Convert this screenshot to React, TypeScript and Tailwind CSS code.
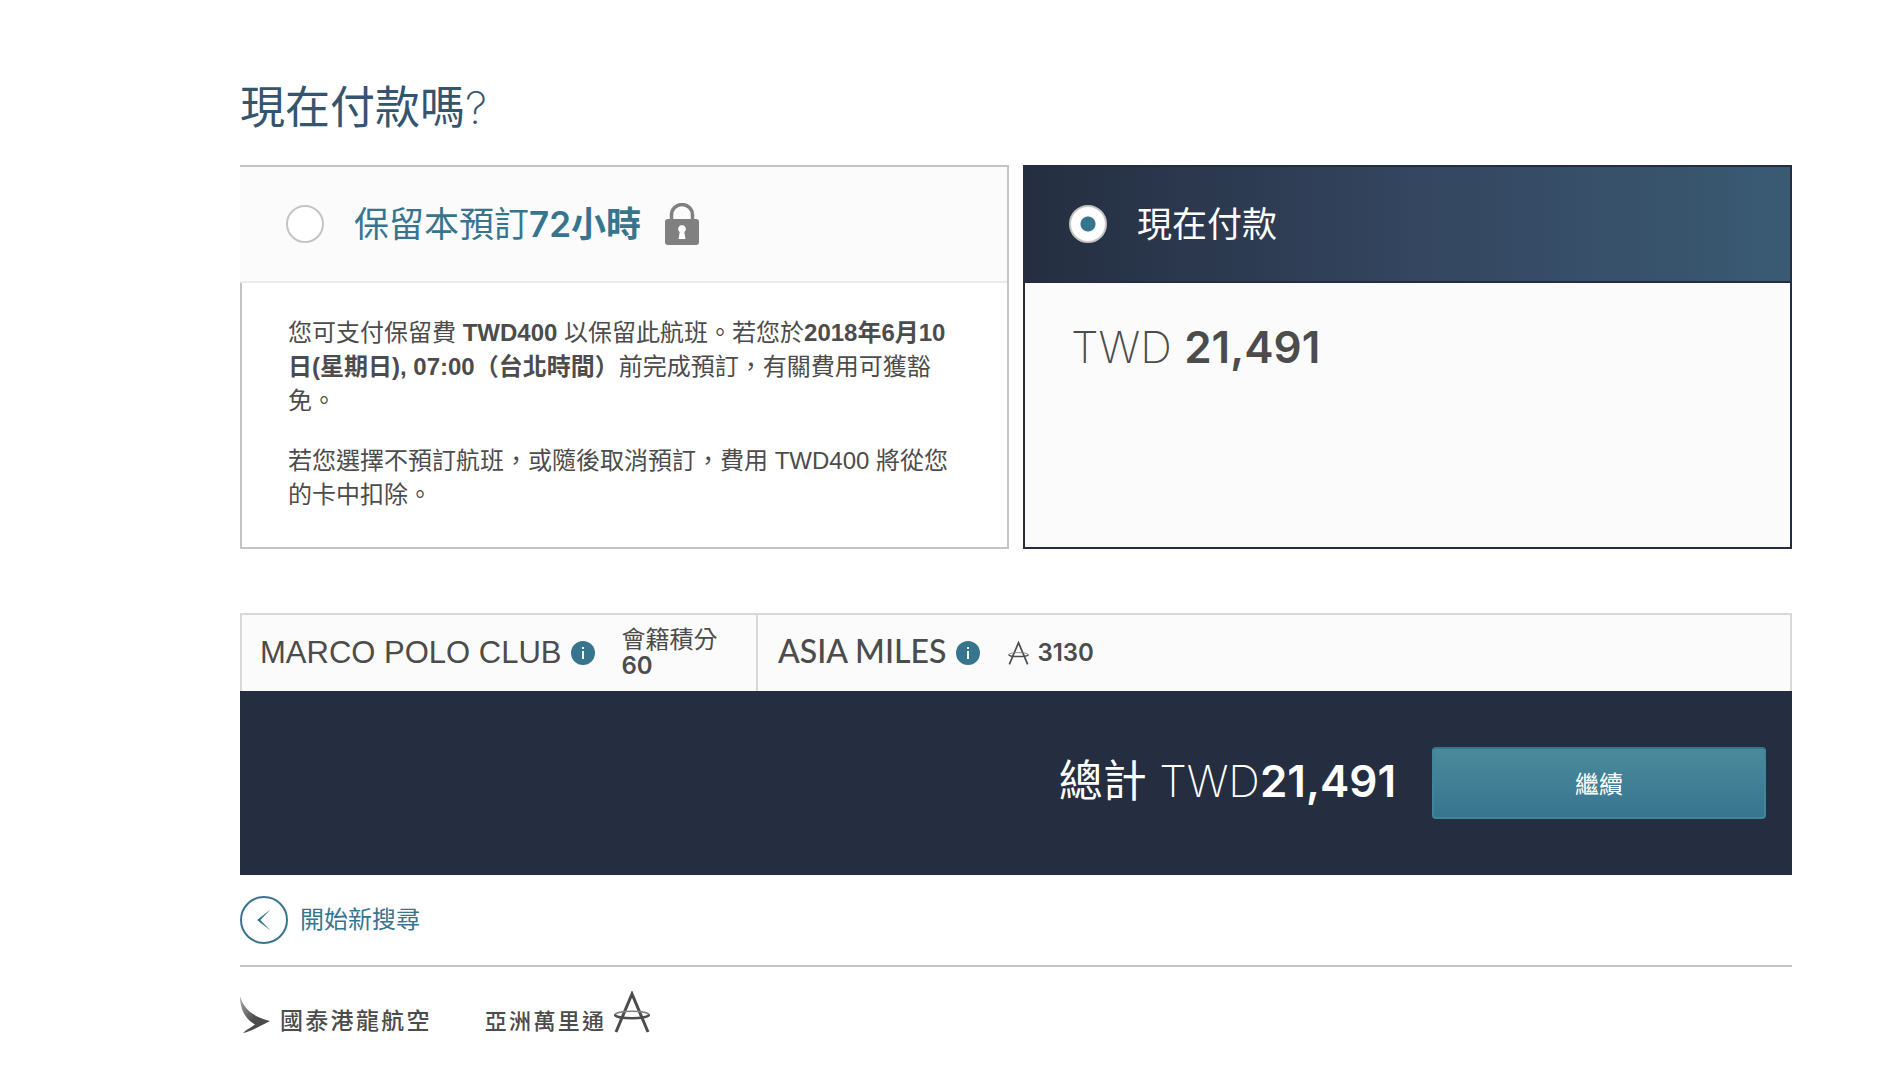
import React from "react";

function InfoButton({ label }: { label: string }) {
  return (
    <button type="button" aria-label={label} className="flex size-6 shrink-0 items-center justify-center rounded-full bg-[#37758f]">
      <svg viewBox="0 0 24 24" className="size-6" fill="#fff" aria-hidden="true">
        <rect x="11" y="6" width="2" height="2" />
        <rect x="11" y="10" width="2" height="8" />
      </svg>
    </button>
  );
}

function MilesIcon({ className }: { className: string }) {
  return (
    <svg viewBox="0 0 36 42" className={className} fill="none" stroke="#4c4c4c" aria-hidden="true">
      <path d="M2 41 18 3 34 41" strokeWidth="3" strokeLinejoin="miter" />
      <path d="M1 24C1 19 35 19 35 24" strokeWidth="1.5" stroke="#808080" />
      <path d="M1 23.500C1 28.500 35 28.500 35 23.500" strokeWidth="2.600" />
    </svg>
  );
}

const radioBase =
  "size-[38px] shrink-0 appearance-none rounded-full border-2 border-[#c4c4c4] bg-white";

export default function App() {
  return (
    <main lang="zh-Hant" className="min-h-screen bg-white pt-[78px] pr-[92px] pl-[240px] font-[Inter,'Noto_Sans_CJK_TC',sans-serif] text-2xl text-[#4c4c4c]">
      <h1 className="text-[45px] leading-[60px] text-[#35546f]">現在付款嗎<span className="font-extralight">?</span></h1>

      <section aria-label="付款選項" className="mt-[27px] grid grid-cols-2 gap-3.5 leading-[34px]">
        <div className="border-r-2 border-b-2 border-[#c4c4c4]">
          <div className="flex h-[118px] items-center border-t-2 border-b-2 border-t-[#c4c4c4] border-b-[#ebebeb] bg-[#fbfbfb] pl-[46px]">
            <input id="hold" name="payment" type="radio" className={radioBase} />
            <label htmlFor="hold" className="ml-[30px] text-[35px] leading-[50px] text-[#37758f]">
              保留本預訂<b className="font-semibold">72小時</b>
            </label>
            <svg viewBox="0 0 34 42" className="ml-6 h-[42px] w-[34px]" aria-hidden="true">
              <path d="M6.500 18V12a10.500 10.500 0 0 1 21 0v6" fill="none" stroke="#808080" strokeWidth="3.500" />
              <rect y="16" width="34" height="26" rx="3" fill="#808080" />
              <path d="M17 22a4 4 0 0 1 2.300 7.200L20.500 36h-7l1.200-6.800A4 4 0 0 1 17 22z" fill="#fff" />
            </svg>
          </div>
          <div className="space-y-[26px] border-l-2 border-[#c4c4c4] pt-[33px] pr-14 pb-[35px] pl-[46px] font-['Liberation_Sans','Noto_Sans_CJK_TC',sans-serif]">
            <p>
              您可支付保留費 <b className="font-bold">TWD400</b> 以保留此航班。若您於<b className="font-bold">2018年6月10日(星期日), 07:00（台北時間）</b>前完成預訂，有關費用可獲豁免。
            </p>
            <p>若您選擇不預訂航班，或隨後取消預訂，費用 TWD400 將從您的卡中扣除。</p>
          </div>
        </div>

        <div className="border-2 border-[#242e40] bg-[#fbfbfb]">
          <div className="flex h-[116px] items-center border-b-2 border-[#242e40] bg-linear-to-r from-[#242e40] via-[#34455f] to-[#3a5a73] pl-11">
            <input id="pay" name="payment" type="radio" defaultChecked className={radioBase + " bg-[radial-gradient(circle,#37758f_7px,#fff_8px)]"} />
            <label htmlFor="pay" className="ml-[30px] text-[35px] leading-[50px] text-white">現在付款</label>
          </div>
          <p className="pt-9 pl-[46px] text-[44px] leading-[56px] font-extralight">
            TWD <b className="font-semibold">21,491</b>
          </p>
        </div>
      </section>

      <section aria-label="總計" className="mt-16">
        <div className="flex h-[78px] border-2 border-b-0 border-[#d8d8d8] bg-[#fbfbfb]">
          <div className="flex w-[516px] shrink-0 items-center border-r-2 border-[#d8d8d8] pl-[18px]">
            <span className="font-['Liberation_Sans'] text-[31px] leading-[40px]">MARCO POLO CLUB</span>
            <span className="ml-2.5 flex"><InfoButton label="馬可孛羅會資料" /></span>
            <p className="ml-[26px] leading-[26px]">
              會籍積分<br /><b className="font-semibold">60</b>
            </p>
          </div>
          <div className="flex items-center pl-5">
            <span className="pb-1 font-[Lato] text-[32px] leading-[40px] font-medium">ASIA MILES</span>
            <span className="ml-2.5 flex"><InfoButton label="亞洲萬里通資料" /></span>
            <MilesIcon className="ml-7 h-6 w-[21px]" />
            <b className="ml-2 font-semibold">3130</b>
          </div>
        </div>
        <div className="flex h-[184px] items-center justify-end gap-9 bg-[#242e40] pr-[26px] text-white">
          <p className="pb-1 text-[44px] leading-[60px]">
            總計 <span className="font-extralight">TWD</span><b className="font-semibold">21,491</b>
          </p>
          <button type="button" className="h-[72px] w-[334px] rounded-sm border-2 border-t-[#37758f] border-x-[#428499] border-b-[#428499] bg-linear-to-b from-[#4a8a9b] to-[#37758f] pt-1">繼續</button>
        </div>
      </section>

      <a href="#search" className="mt-[21px] flex w-fit items-center gap-3 text-[#37758f]">
        <svg viewBox="0 0 48 48" className="size-12" aria-hidden="true">
          <circle cx="24" cy="24" r="23" fill="none" stroke="currentColor" strokeWidth="2" />
          <path d="M30.500 13.500 17 24l13.500 10.500L20.500 24z" fill="currentColor" />
        </svg>
        開始新搜尋
      </a>

      <footer className="mt-[21px] flex items-end gap-[53px] border-t-2 border-[#c4c4c4] pt-6 text-[23px] leading-[24px] font-medium tracking-widest">
        <span className="flex items-end gap-2.5">
          <svg viewBox="0 0 30 38" className="h-[38px] w-[30px]" aria-hidden="true">
            <linearGradient id="wing" x1="0" y1="0" x2="0.5" y2="0.6">
              <stop offset="0" stopColor="#b0b0b0" />
              <stop offset="1" stopColor="#4c4c4c" />
            </linearGradient>
            <path d="M0 1C3 12 12 22 30 26 20 31 12 36 3 38 7 34 12 32 15 29.500 5 24 0 14 0 1z" fill="url(#wing)" />
          </svg>
          國泰港龍航空
        </span>
        <span className="flex items-end gap-2 text-[22px]">
          亞洲萬里通
          <MilesIcon className="h-[42px] w-9" />
        </span>
      </footer>
    </main>
  );
}
